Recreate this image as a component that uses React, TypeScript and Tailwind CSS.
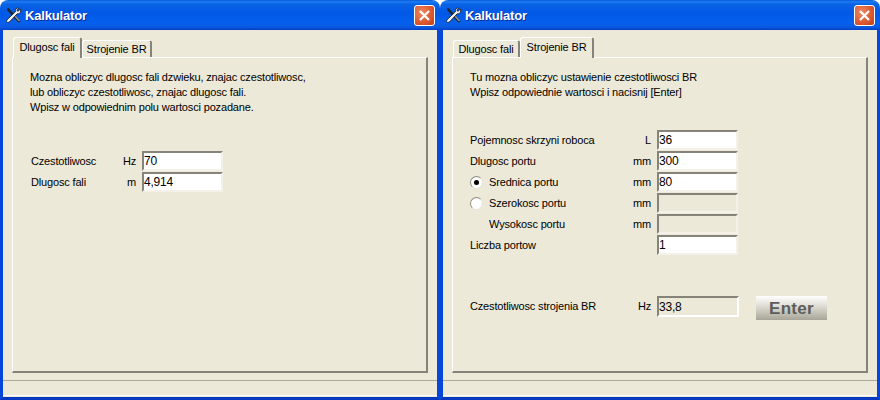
const fieldBase =
  'w-[81px] h-[20px] shrink-0 pl-0 text-[12px] tracking-[-0.2px] leading-none text-black outline-none border-2 border-t-[#85837a] border-l-[#85837a] border-r-[#f4f2e8] border-b-[#f4f2e8]';

function ToolsIcon() {
  return (
    <svg width="17" height="17" viewBox="0 0 17 17" className="shrink-0">
      {/* screwdriver */}
      <path d="M2 1.5 L3.5 1 L9 7 L14.5 12.5 L15.5 15 L13.5 15.5 L11 13 L6 7.5 L2 3 Z" fill="#20242c" />
      <path d="M9.5 8.5 L14.5 14" stroke="#8f97a3" strokeWidth="1.4" />
      {/* wrench */}
      <path
        d="M15.5 2 L13 4.3 L11.8 3.4 L13.8 1.2 C11.5 0.4 9.6 2.2 10.4 4.8 L2 12.8 L1.4 14.4 L2.8 15.6 L4.4 15 L12.2 6.8 C14.6 7.4 16.4 5 15.5 2 Z"
        fill="#eef0f2"
        stroke="#1c2028"
        strokeWidth="0.9"
      />
    </svg>
  );
}

function CloseButton() {
  return (
    <div className="w-[21px] h-[21px] rounded-[3px] border border-white bg-[radial-gradient(circle_at_35%_35%,#ee8a63_0%,#dd5b33_55%,#c23c19_100%)] flex items-center justify-center">
      <svg width="13" height="13" viewBox="0 0 13 13">
        <path d="M2 2 L11 11 M11 2 L2 11" stroke="white" strokeWidth="2.2" />
      </svg>
    </div>
  );
}

function Tab({ label, active, width }: { label: string; active: boolean; width: string }) {
  return (
    <div
      className={`${width} rounded-t-[3px] border-t border-l border-white border-r-2 border-r-[#85837a] flex justify-center bg-[#ece9d8] ${
        active ? 'h-[21px] relative z-10 -mb-px pt-[2px]' : 'h-[18px] mt-[3px] pt-px border-b border-b-white'
      }`}
    >
      {label}
    </div>
  );
}

function Field({ value, disabled }: { value?: string; disabled?: boolean }) {
  return (
    <input
      readOnly
      value={value ?? ''}
      className={`${fieldBase} ${disabled ? 'bg-[#ece9d8]' : 'bg-white'}`}
    />
  );
}

function Radio({ checked }: { checked?: boolean }) {
  return (
    <span className="w-[13px] h-[13px] shrink-0 rounded-full bg-white border border-[#8d8b80] border-b-[#e4e2d6] border-r-[#e4e2d6] flex items-center justify-center">
      {checked && <span className="w-[5px] h-[5px] rounded-full bg-black" />}
    </span>
  );
}

function Row({
  label,
  unit,
  value,
  disabled,
  radio,
  indent,
}: {
  label: string;
  unit?: string;
  value?: string;
  disabled?: boolean;
  radio?: 'on' | 'off';
  indent?: boolean;
}) {
  return (
    <div className="flex items-center h-[20px] mb-px">
      {radio && <Radio checked={radio === 'on'} />}
      <span className={`flex-1 ${radio ? 'ml-[6px]' : ''} ${indent ? 'ml-[19px]' : ''}`}>{label}</span>
      <span className="mr-[6px]">{unit}</span>
      <Field value={value} disabled={disabled} />
    </div>
  );
}

function Window({ active, children }: { active: 0 | 1; children: React.ReactNode }) {
  return (
    <div className="w-[440px] h-[400px] flex flex-col rounded-t-[8px] overflow-hidden">
      <div className="h-[30px] shrink-0 flex items-center pl-[5px] pr-[2px] bg-[linear-gradient(180deg,#0a5ad6_0%,#1c7cf4_6%,#0a62e4_14%,#0058e6_45%,#0660ee_75%,#0a5ae0_90%,#0340c8_100%)]">
        <ToolsIcon />
        <span className="ml-[3px] flex-1 text-[13px] font-bold text-white [text-shadow:1px_1px_#0a2a9a]">
          Kalkulator
        </span>
        <div className="mr-[3px]">
          <CloseButton />
        </div>
      </div>
      <div className="flex-1 flex flex-col bg-[#ece9d8] border-x-[3px] border-b-[3px] border-x-[#0646d8] border-b-[#0638c0]">
        <div className="flex-1 flex flex-col pt-[7px] pl-[9px] pr-[9px]">
          <div className="flex h-[20px] pl-px">
            <Tab label="Dlugosc fali" active={active === 0} width={active === 0 ? 'w-[69px]' : 'w-[67px]'} />
            <Tab label="Strojenie BR" active={active === 1} width={active === 1 ? 'w-[74px]' : 'w-[70px]'} />
          </div>
          <div className="h-[316px] border-t border-l border-white border-r-2 border-b-2 border-r-[#85837a] border-b-[#85837a] pl-[17px]">
            {children}
          </div>
        </div>
        <div className="h-[16px] mb-px border-t border-t-[#aca899] shadow-[inset_0_-1px_0_#fff]" />
      </div>
    </div>
  );
}

export default function App() {
  return (
    <div className="w-[880px] h-[400px] flex bg-white overflow-hidden text-[11px] tracking-[-0.16px] leading-[15px] text-black font-['Liberation_Sans',Arial,sans-serif]">
      <Window active={0}>
        <div className="pt-[12px]">
          <p>Mozna obliczyc dlugosc fali dzwieku, znajac czestotliwosc,</p>
          <p>lub obliczyc czestotliwosc, znajac dlugosc fali.</p>
          <p>Wpisz w odpowiednim polu wartosci pozadane.</p>
        </div>
        <div className="mt-[36px] ml-px w-[192px]">
          <Row label="Czestotliwosc" unit="Hz" value="70" />
          <Row label="Dlugosc fali" unit="m" value="4,914" />
        </div>
      </Window>
      <Window active={1}>
        <div className="pt-[12px]">
          <p>Tu mozna obliczyc ustawienie czestotliwosci BR</p>
          <p>Wpisz odpowiednie wartosci i nacisnij [Enter]</p>
        </div>
        <div className="mt-[30px] w-[268px]">
          <Row label="Pojemnosc skrzyni roboca" unit="L" value="36" />
          <Row label="Dlugosc portu" unit="mm" value="300" />
          <Row label="Srednica portu" unit="mm" value="80" radio="on" />
          <Row label="Szerokosc portu" unit="mm" disabled radio="off" />
          <Row label="Wysokosc portu" unit="mm" disabled indent />
          <Row label="Liczba portow" value="1" />
        </div>
        <div className="mt-[41px] flex items-start">
          <div className="w-[187px] shrink-0 flex items-center h-[21px]">
            <span className="flex-1">Czestotliwosc strojenia BR</span>
            <span className="mr-[6px]">Hz</span>
          </div>
          <input
            readOnly
            value="33,8"
            className="w-[82px] h-[21px] shrink-0 pl-0 text-[12px] tracking-[-0.2px] leading-none outline-none bg-[#ece9d8] border-2 border-t-[#85837a] border-l-[#85837a] border-r-white border-b-white"
          />
          <button className="ml-[17px] w-[71px] h-[24px] text-[17px] font-bold tracking-[0.3px] text-[#5c5c5c] bg-[linear-gradient(180deg,#ffffff_0%,#dcdad0_45%,#a8a598_100%)]">
            Enter
          </button>
        </div>
      </Window>
    </div>
  );
}
